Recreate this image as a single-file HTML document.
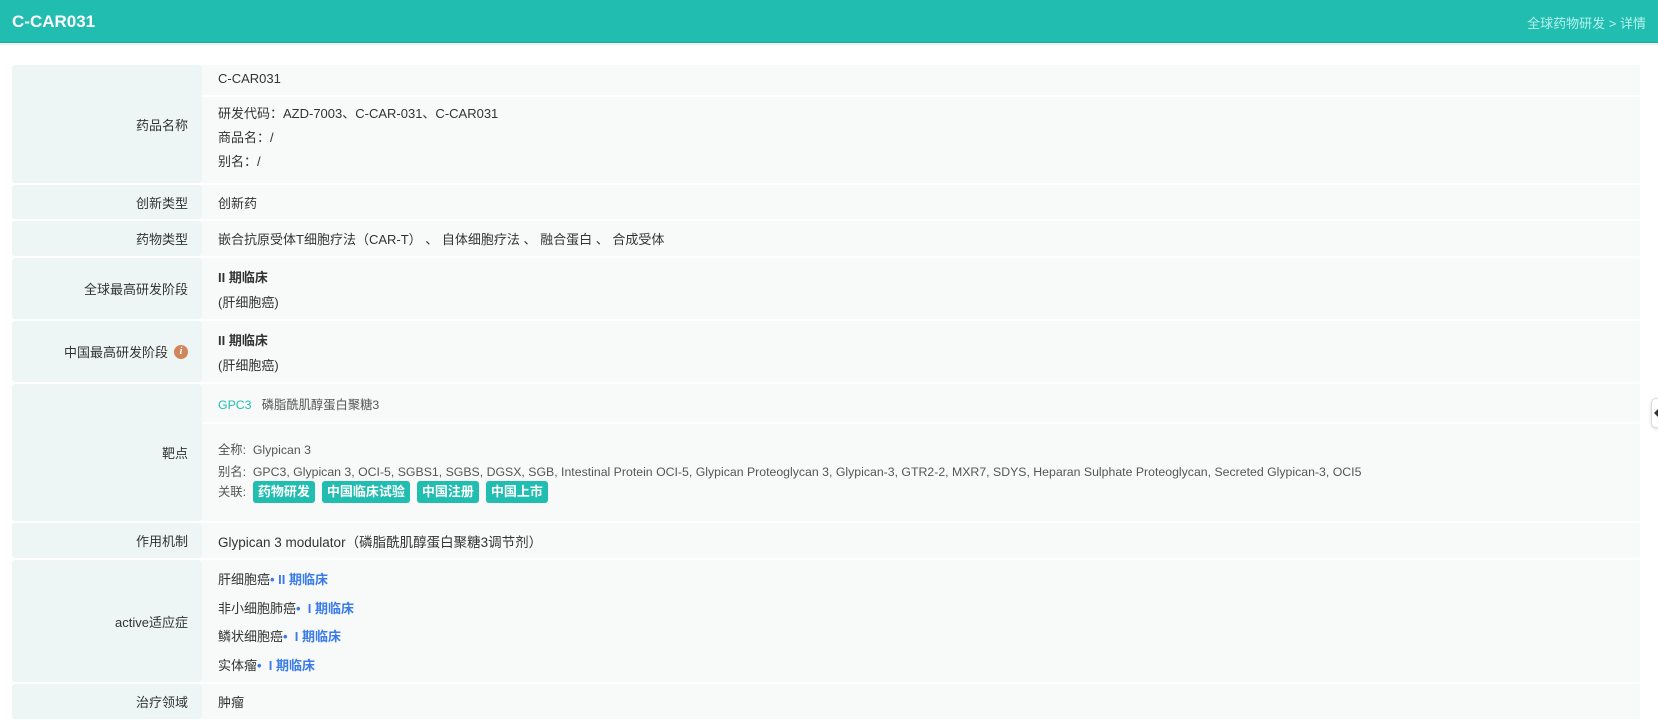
<!DOCTYPE html>
<html><head><meta charset="utf-8"><style>
*{margin:0;padding:0;box-sizing:border-box}
body{width:1658px;height:720px;overflow:hidden;background:#fff;font-family:"Liberation Sans","Noto Sans CJK SC",sans-serif;font-size:13px;color:#333;position:relative}
.hd{position:absolute;left:0;top:0;width:1658px;height:43px;background:#20bdb0;border-bottom:1px solid #1aa99d}
.hd .t{position:absolute;left:12px;top:12px;color:#fff;font-weight:bold;font-size:17px}
.hd .b{position:absolute;right:12px;top:13px;color:#b5f2ec;font-size:13px}
.hl{position:absolute;left:0;top:44px;width:1658px;height:1px;background:#e6f2f1}
.l{position:absolute;left:12px;width:190px;background:#eef6f5;border-radius:3px;text-align:right;padding-right:14px;display:flex;align-items:center;justify-content:flex-end}
.v{position:absolute;left:202px;width:1438px;background:#f8fafa;padding-left:16px}
.ln{position:absolute;left:218px;white-space:nowrap}
.tag{display:inline-block;background:#20bdb0;color:#fff;font-weight:bold;border-radius:3px;padding:0 5px;height:22px;line-height:22px;margin-right:7px}
.bl{color:#3a7bea;font-weight:bold}
.i{display:inline-block;width:14px;height:14px;border-radius:50%;background:#d0855b;color:#fff;font-size:10px;font-style:italic;font-weight:bold;text-align:center;line-height:14px;margin-left:6px;font-family:"Liberation Serif",serif}
</style></head><body>
<div class="hd"><div class="t">C-CAR031</div><div class="b">全球药物研发 &gt; 详情</div></div>
<div class="hl"></div>

<div class="l" style="top:65px;height:118px">药品名称</div>
<div class="v" style="top:65px;height:30px"></div>
<div class="v" style="top:97px;height:86px"></div>
<div class="ln" style="top:71px">C-CAR031</div>
<div class="ln" style="top:103px">研发代码：AZD-7003、C-CAR-031、C-CAR031</div>
<div class="ln" style="top:127px">商品名：/</div>
<div class="ln" style="top:151px">别名：/</div>

<div class="l" style="top:185px;height:34px">创新类型</div>
<div class="v" style="top:185px;height:34px"></div>
<div class="ln" style="top:193px">创新药</div>

<div class="l" style="top:221px;height:35px">药物类型</div>
<div class="v" style="top:221px;height:35px"></div>
<div class="ln" style="top:229px">嵌合抗原受体T细胞疗法（CAR-T） 、 自体细胞疗法 、 融合蛋白 、 合成受体</div>

<div class="l" style="top:258px;height:61px">全球最高研发阶段</div>
<div class="v" style="top:258px;height:61px"></div>
<div class="ln" style="top:267px;font-weight:bold">II 期临床</div>
<div class="ln" style="top:292px">(肝细胞癌)</div>

<div class="l" style="top:321px;height:61px">中国最高研发阶段<span class="i">i</span></div>
<div class="v" style="top:321px;height:61px"></div>
<div class="ln" style="top:330px;font-weight:bold">II 期临床</div>
<div class="ln" style="top:355px">(肝细胞癌)</div>

<div class="l" style="top:384px;height:137px">靶点</div>
<div class="v" style="top:384px;height:38px"></div>
<div class="v" style="top:424px;height:97px"></div>
<div class="ln" style="top:395px;font-size:12.3px;color:#555"><span style="color:#20bdb0">GPC3</span>&nbsp;&nbsp; 磷脂酰肌醇蛋白聚糖3</div>
<div class="ln" style="top:440px;font-size:12.3px;color:#555">全称:&nbsp; Glypican 3</div>
<div class="ln" style="top:462px;font-size:12.3px;color:#555">别名:&nbsp; GPC3, Glypican 3, OCI-5, SGBS1, SGBS, DGSX, SGB, Intestinal Protein OCI-5, Glypican Proteoglycan 3, Glypican-3, GTR2-2, MXR7, SDYS, Heparan Sulphate Proteoglycan, Secreted Glypican-3, OCI5</div>
<div class="ln" style="top:481px;font-size:12.3px;color:#555">关联:&nbsp; <span class="tag" style="font-size:13px">药物研发</span><span class="tag" style="font-size:13px">中国临床试验</span><span class="tag" style="font-size:13px">中国注册</span><span class="tag" style="font-size:13px">中国上市</span></div>

<div class="l" style="top:523px;height:35px">作用机制</div>
<div class="v" style="top:523px;height:35px"></div>
<div class="ln" style="top:531px;font-size:13.5px">Glypican 3 modulator（磷脂酰肌醇蛋白聚糖3调节剂）</div>

<div class="l" style="top:560px;height:122px">active适应症</div>
<div class="v" style="top:560px;height:122px"></div>
<div class="ln" style="top:569px">肝细胞癌<span class="bl">• II 期临床</span></div>
<div class="ln" style="top:598px">非小细胞肺癌<span class="bl">• &nbsp;I 期临床</span></div>
<div class="ln" style="top:626px">鳞状细胞癌<span class="bl">• &nbsp;I 期临床</span></div>
<div class="ln" style="top:655px">实体瘤<span class="bl">• &nbsp;I 期临床</span></div>

<div class="l" style="top:684px;height:35px">治疗领域</div>
<div class="v" style="top:684px;height:35px"></div>
<div class="ln" style="top:692px">肿瘤</div>

<div style="position:absolute;left:1651px;top:398px;width:12px;height:30px;background:#fff;border:1px solid #ddd;border-radius:5px;box-shadow:0 1px 3px rgba(0,0,0,.15)"></div>
<div style="position:absolute;left:1654px;top:409px;width:0;height:0;border-top:4px solid transparent;border-bottom:4px solid transparent;border-right:4px solid #333"></div>
</body></html>
